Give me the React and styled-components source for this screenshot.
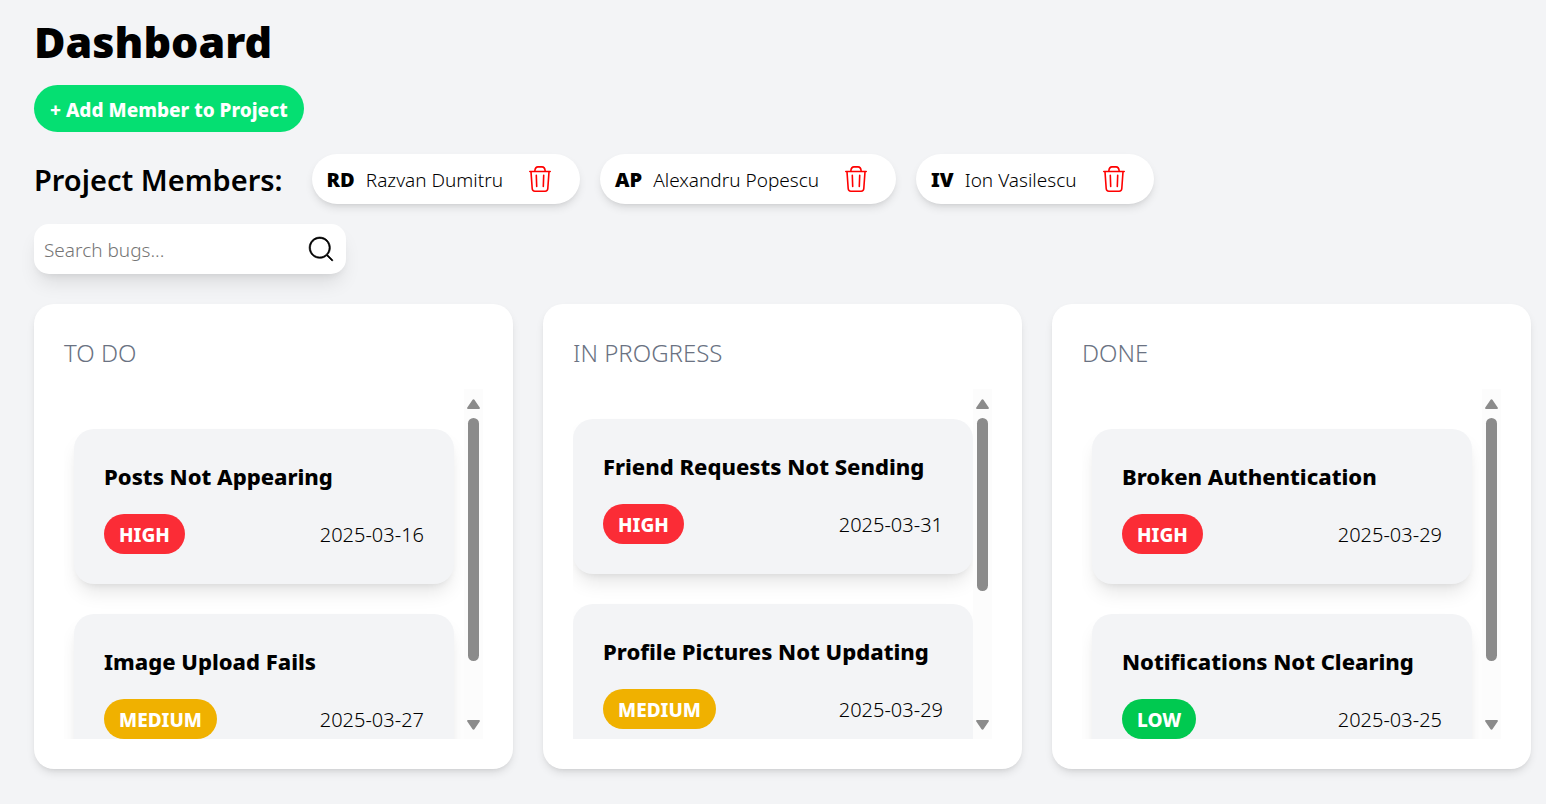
import React from 'react';
import styled, { createGlobalStyle } from 'styled-components';
import { CiSearch } from 'react-icons/ci';

const GlobalStyle = createGlobalStyle`
  *, *::before, *::after { box-sizing: border-box; }
  body {
    margin: 0;
    background: #f3f4f6;
    color: #000;
    font-family: 'Noto Sans', 'Open Sans', sans-serif;
    font-size: 20px;
    line-height: 30px;
  }
  h1, h2, h3, p, ul { margin: 0; padding: 0; }
  ul { list-style: none; }
  button, input { font: inherit; color: inherit; border: 0; padding: 0; background: none; }
  button { cursor: pointer; }
`;

const shadowMd = '0 5px 8px -1px rgba(0, 0, 0, 0.1), 0 3px 5px -3px rgba(0, 0, 0, 0.1)';
const shadowLg = '0 12px 19px -4px rgba(0, 0, 0, 0.1), 0 5px 8px -5px rgba(0, 0, 0, 0.1)';

const Page = styled.main`
  padding: 15px 15px 35px 34px;
`;

const Title = styled.h1`
  margin-bottom: 16px;
  font-size: 43px;
  font-weight: 900;
  line-height: 54px;
`;

const AddButton = styled.button`
  display: block;
  height: 47px;
  margin-bottom: 22px;
  padding: 2px 16px 0;
  border-radius: 24px;
  background: #05df72;
  color: #fff;
  font-size: 19px;
  font-weight: 800;
`;

const Members = styled.section`
  display: flex;
  align-items: center;
  gap: 29px;
  margin-bottom: 20px;
`;

const MembersTitle = styled.h2`
  padding-top: 2px;
  font-size: 29px;
  font-weight: 600;
  line-height: 40px;
`;

const MemberList = styled.ul`
  display: flex;
  gap: 20px;
`;

const Member = styled.li`
  display: flex;
  align-items: center;
  height: 50px;
  padding: 0 25px 0 15px;
  border-radius: 25px;
  background: #fff;
  box-shadow: ${shadowMd};
`;

const Initials = styled.span`
  margin-right: 11px;
  padding-top: 2px;
  font-weight: 900;
`;

const MemberName = styled.span`
  margin-right: 22px;
  padding-top: 2px;
  font-size: 19px;
  font-weight: 300;
`;

const IconButton = styled.button`
  display: flex;
  color: ${({ $color }) => $color};
`;

const SearchBar = styled.form`
  display: flex;
  align-items: center;
  width: 312px;
  height: 50px;
  margin-bottom: 30px;
  padding: 0 9px 0 10px;
  border-radius: 15px;
  background: #fff;
  box-shadow: ${shadowLg};
`;

const SearchInput = styled.input`
  flex: 1;
  min-width: 0;
  padding-top: 2px;
  outline: none;
  font-size: 19px;
  font-weight: 300;
  &::placeholder { color: #757575; opacity: 1; }
`;

const Board = styled.div`
  display: grid;
  grid-template-columns: repeat(3, minmax(0, 1fr));
  gap: 30px;
`;

const ColumnBox = styled.section`
  padding: 30px;
  border-radius: 20px;
  background: #fff;
  box-shadow: ${shadowMd};
`;

const ColumnTitle = styled.h2`
  margin-bottom: 17px;
  color: #6a7282;
  font-size: 24px;
  font-weight: 300;
  line-height: 38px;
`;

const Scroller = styled.div`
  display: flex;
  height: 350px;
`;

const BugList = styled.ul`
  display: flex;
  flex: 1;
  flex-direction: column;
  gap: 30px;
  min-width: 0;
  padding: ${({ $inset }) => ($inset ? '40px 10px' : '30px 0')};
  overflow-y: auto;
  scrollbar-width: none;
`;

const Bug = styled.li`
  flex-shrink: 0;
  padding: 30px;
  border-radius: 20px;
  background: #f3f4f6;
  box-shadow: ${shadowLg};
`;

const BugTitle = styled.h3`
  margin-bottom: 20px;
  font-size: 22px;
  font-weight: 800;
  line-height: 35px;
  white-space: nowrap;
`;

const BugMeta = styled.div`
  display: flex;
  align-items: center;
  justify-content: space-between;
`;

const priorityColors = { HIGH: '#fb2c36', MEDIUM: '#f0b100', LOW: '#00c950' };

const Priority = styled.span`
  padding: 6px 15px 4px;
  border-radius: 20px;
  background: ${({ $level }) => priorityColors[$level]};
  color: #fff;
  font-size: 19px;
  font-weight: 800;
`;

const BugDate = styled.time`
  padding-top: 2px;
  font-weight: 300;
`;

const Rail = styled.div`
  display: flex;
  flex-direction: column;
  align-items: center;
  gap: 9px;
  width: 19px;
  padding: 10px 0 9px;
  background: #fcfcfc;
`;

const Track = styled.div`
  flex: 1;
  width: 11px;
`;

const Thumb = styled.div`
  height: ${({ $share }) => $share}%;
  border-radius: 6px;
  background: #8b8b8b;
`;

const Arrow = ({ down }) => (
  <svg width="13" height="10" viewBox="0 0 13 10" aria-hidden="true">
    <path
      d={down
        ? 'M1.2 0h10.6c.9 0 1.4.9.9 1.6L7.6 9.1c-.5.8-1.7.8-2.2 0L.3 1.6C-.2.9.3 0 1.2 0z'
        : 'M1.2 10h10.6c.9 0 1.4-.9.9-1.6L7.6.9c-.5-.8-1.7-.8-2.2 0L.3 8.4c-.5.7 0 1.6.9 1.6z'}
      fill="#8b8b8b"
    />
  </svg>
);

const TrashIcon = () => (
  <svg
    width="30"
    height="30"
    viewBox="0 0 30 30"
    fill="none"
    stroke="currentColor"
    strokeWidth="1.6"
    strokeLinecap="round"
    strokeLinejoin="round"
    aria-hidden="true"
  >
    <path d="M4.8 7.5h20.4" />
    <path d="M9.8 7.2c.2-2.6 1.2-4.3 3.2-4.3h4c2 0 3 1.700 3.200 4.300" />
    <path d="M6 7.800l1.200 16.700c.1 1.800 1 2.700 2.700 2.700h10.200c1.700 0 2.600-.9 2.700-2.700L24 7.800" />
    <path d="M11.300 11.300l.4 11.200M18.700 11.300l-.4 11.200" />
  </svg>
);

const members = [
  { initials: 'RD', name: 'Razvan Dumitru' },
  { initials: 'AP', name: 'Alexandru Popescu' },
  { initials: 'IV', name: 'Ion Vasilescu' },
];

const columns = [
  {
    title: 'TO DO',
    inset: true,
    share: 83,
    bugs: [
      { title: 'Posts Not Appearing', level: 'HIGH', date: '2025-03-16' },
      { title: 'Image Upload Fails', level: 'MEDIUM', date: '2025-03-27' },
    ],
  },
  {
    title: 'IN PROGRESS',
    inset: false,
    share: 59,
    bugs: [
      { title: 'Friend Requests Not Sending', level: 'HIGH', date: '2025-03-31' },
      { title: 'Profile Pictures Not Updating', level: 'MEDIUM', date: '2025-03-29' },
    ],
  },
  {
    title: 'DONE',
    inset: true,
    share: 83,
    bugs: [
      { title: 'Broken Authentication', level: 'HIGH', date: '2025-03-29' },
      { title: 'Notifications Not Clearing', level: 'LOW', date: '2025-03-25' },
    ],
  },
];

const Column = ({ title, inset, share, bugs }) => (
  <ColumnBox>
    <ColumnTitle>{title}</ColumnTitle>
    <Scroller>
      <BugList $inset={inset}>
        {bugs.map((bug) => (
          <Bug key={bug.title}>
            <BugTitle>{bug.title}</BugTitle>
            <BugMeta>
              <Priority $level={bug.level}>{bug.level}</Priority>
              <BugDate dateTime={bug.date}>{bug.date}</BugDate>
            </BugMeta>
          </Bug>
        ))}
      </BugList>
      <Rail aria-hidden="true">
        <Arrow />
        <Track>
          <Thumb $share={share} />
        </Track>
        <Arrow down />
      </Rail>
    </Scroller>
  </ColumnBox>
);

export default function App() {
  return (
    <>
      <GlobalStyle />
      <Page>
        <Title>Dashboard</Title>
        <AddButton type="button">+ Add Member to Project</AddButton>
        <Members>
          <MembersTitle>Project Members:</MembersTitle>
          <MemberList>
            {members.map(({ initials, name }) => (
              <Member key={initials}>
                <Initials>{initials}</Initials>
                <MemberName>{name}</MemberName>
                <IconButton type="button" $color="#ff0000" aria-label={`Remove ${name}`}>
                  <TrashIcon />
                </IconButton>
              </Member>
            ))}
          </MemberList>
        </Members>
        <SearchBar role="search" onSubmit={(event) => event.preventDefault()}>
          <SearchInput type="text" placeholder="Search bugs..." aria-label="Search bugs" />
          <IconButton type="submit" $color="#000" aria-label="Search">
            <CiSearch size={32} strokeWidth={0.5} />
          </IconButton>
        </SearchBar>
        <Board>
          {columns.map((column) => (
            <Column key={column.title} {...column} />
          ))}
        </Board>
      </Page>
    </>
  );
}
